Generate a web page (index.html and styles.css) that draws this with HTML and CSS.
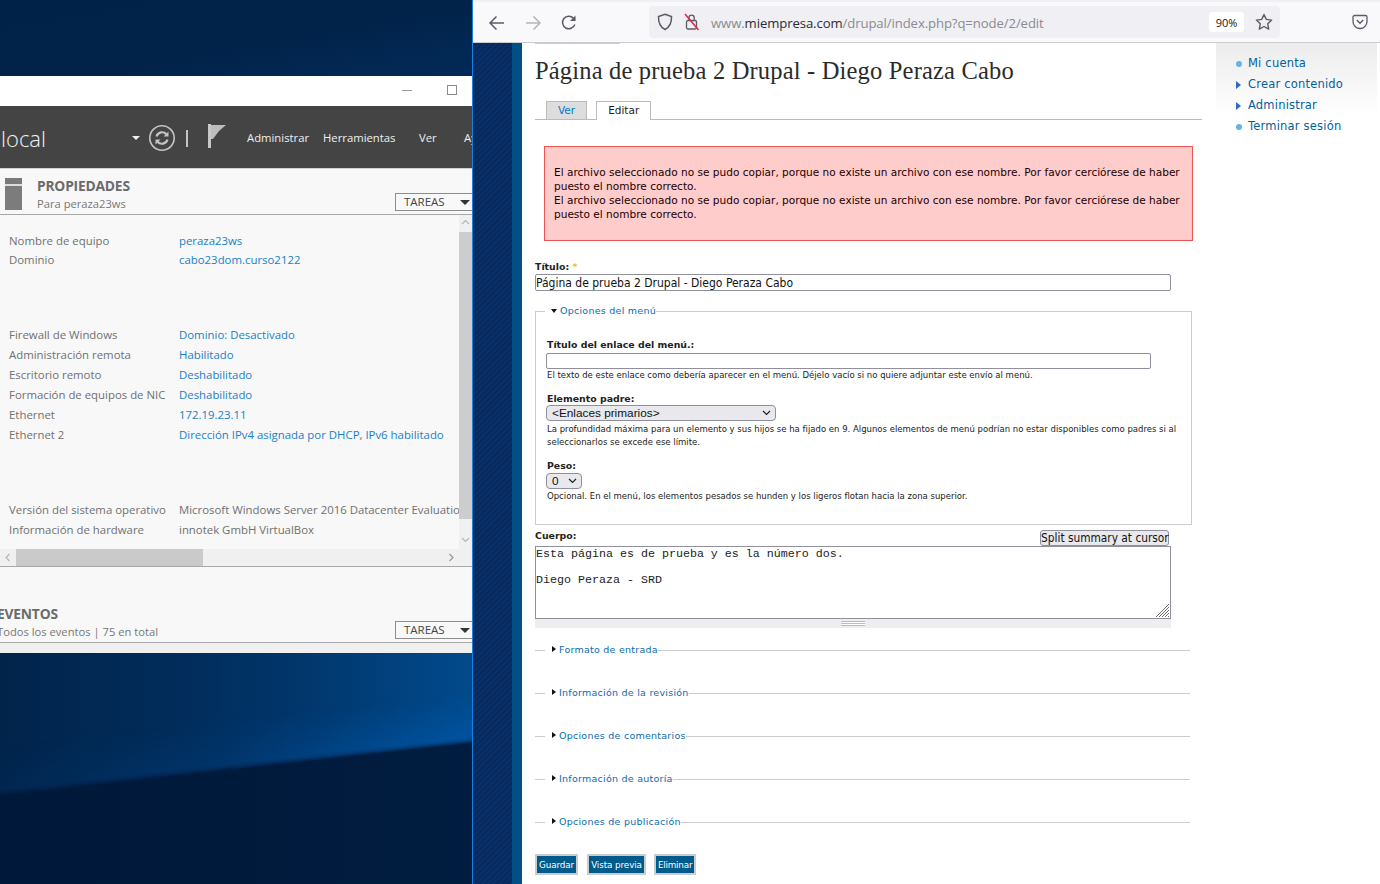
FILE: index.html
```html
<!DOCTYPE html>
<html lang="es">
<head>
<meta charset="utf-8">
<title>Página de prueba 2 Drupal</title>
<link rel="stylesheet" href="styles.css">
</head>
<body>
<div class="desktop">
  <div class="beam-top"></div>
  <div class="beam-bottom"></div>
  <div class="window">
    <div class="titlebar">
      <span class="win-min"></span>
      <span class="win-max"></span>
    </div>
    <div class="srv-head">
      <span class="srv-title">local</span>
      <span class="srv-caret"></span>
      <svg class="srv-refresh" width="28" height="28" viewBox="0 0 28 28"><circle cx="14" cy="14" r="12.2" fill="none" stroke="#c4c4c4" stroke-width="1.6"/><path d="M8.5 12.5a5.8 5.8 0 0 1 10-2.2M19.5 15.5a5.8 5.8 0 0 1-10 2.2" fill="none" stroke="#c4c4c4" stroke-width="2.2"/><path d="M20.5 7.5v5h-5zM7.5 20.5v-5h5z" fill="#c4c4c4"/></svg>
      <span class="srv-sep"></span>
      <svg class="srv-flag" width="18" height="24" viewBox="0 0 18 24"><path d="M0 0h3v24H0z" fill="#c8c8c8"/><path d="M3 1h15l-7 6-6 8H3z" fill="#bdbdbd"/></svg>
      <nav class="srv-nav">
        <span class="nav-a">Administrar</span>
        <span class="nav-b">Herramientas</span>
        <span class="nav-c">Ver</span>
        <span class="nav-d">Ayuda</span>
      </nav>
    </div>
    <div class="sec-head">
      <div class="srv-icon"></div>
      <div class="sec-text">
        <strong>PROPIEDADES</strong>
        <span>Para peraza23ws</span>
      </div>
      <div class="tasks">TAREAS<i></i></div>
    </div>
    <div class="props">
      <div class="props-body">
        <div class="props-main">
          <div class="group g1">
            <div class="row"><span>Nombre de equipo</span><a>peraza23ws</a></div>
            <div class="row"><span>Dominio</span><a>cabo23dom.curso2122</a></div>
          </div>
          <div class="group g2">
            <div class="row"><span>Firewall de Windows</span><a>Dominio: Desactivado</a></div>
            <div class="row"><span>Administración remota</span><a>Habilitado</a></div>
            <div class="row"><span>Escritorio remoto</span><a>Deshabilitado</a></div>
            <div class="row"><span>Formación de equipos de NIC</span><a>Deshabilitado</a></div>
            <div class="row"><span>Ethernet</span><a>172.19.23.11</a></div>
            <div class="row"><span>Ethernet 2</span><a>Dirección IPv4 asignada por DHCP, IPv6 habilitado</a></div>
          </div>
          <div class="group g3">
            <div class="row"><span>Versión del sistema operativo</span><em>Microsoft Windows Server 2016 Datacenter Evaluation</em></div>
            <div class="row"><span>Información de hardware</span><em>innotek GmbH VirtualBox</em></div>
          </div>
        </div>
        <div class="vbar">
          <svg class="chev" width="13" height="14" viewBox="0 0 13 14"><path d="M3 9l3.5-3.5L10 9" fill="none" stroke="#b5b5b5" stroke-width="1.2"/></svg>
          <div class="vthumb"></div>
          <svg class="chev" width="13" height="14" viewBox="0 0 13 14"><path d="M3 5l3.5 3.5L10 5" fill="none" stroke="#b5b5b5" stroke-width="1.2"/></svg>
        </div>
      </div>
      <div class="hbar">
        <svg width="16" height="17" viewBox="0 0 16 17"><path d="M9.5 5L6 8.5l3.5 3.5" fill="none" stroke="#b5b5b5" stroke-width="1.2"/></svg>
        <div class="hthumb"></div>
        <svg class="hright" width="16" height="17" viewBox="0 0 16 17"><path d="M6.5 5L10 8.5 6.5 12" fill="none" stroke="#999" stroke-width="1.2"/></svg>
      </div>
    </div>
    <div class="sec-head events">
      <div class="sec-text">
        <strong>EVENTOS</strong>
        <span>Todos los eventos | 75 en total</span>
      </div>
      <div class="tasks">TAREAS<i></i></div>
    </div>
    <div class="win-foot"></div>
  </div>
</div>

<div class="browser">
  <div class="tabstrip"></div>
  <div class="toolbar">
    <svg class="tb-icon tb-back" width="18" height="16" viewBox="0 0 18 16"><path d="M16 8H2M8.500 1.500L2 8l6.500 6.500" fill="none" stroke="#5b5b66" stroke-width="1.500"/></svg>
    <svg class="tb-icon tb-fwd" width="18" height="16" viewBox="0 0 18 16"><path d="M2 8h14M9.500 1.500L16 8l-6.500 6.500" fill="none" stroke="#b4b4ba" stroke-width="1.500"/></svg>
    <svg class="tb-icon tb-reload" width="18" height="18" viewBox="0 0 18 18"><path d="M14.800 10.500A6.300 6.300 0 1 1 13.500 4.200L15 6" fill="none" stroke="#5b5b66" stroke-width="1.500"/><path d="M15.500 1.500v5.500H10z" fill="#5b5b66"/></svg>
    <div class="urlbar">
      <svg class="ub-shield" width="16" height="18" viewBox="0 0 16 18"><path d="M8 1.200l6.500 2.300c.2 5.800-1.700 10.500-6.500 13-4.800-2.500-6.700-7.200-6.500-13z" fill="none" stroke="#5b5b66" stroke-width="1.500"/></svg>
      <svg class="ub-lock" width="16" height="18" viewBox="0 0 16 18"><rect x="2.500" y="7.500" width="10" height="8.500" rx="1.500" fill="none" stroke="#5b5b66" stroke-width="1.300"/><path d="M5 7.500V4.800a2.600 2.600 0 0 1 5.200 0v2.700" fill="none" stroke="#5b5b66" stroke-width="1.300"/><path d="M1 1l13.500 16" stroke="#e22850" stroke-width="1.600"/></svg>
      <div class="ub-url">www.<b>miempresa.com</b>/drupal/index.php?q=node/2/edit</div>
      <div class="ub-zoom">90%</div>
      <svg class="ub-star" width="18" height="18" viewBox="0 0 18 18"><path d="M9 1.500l2.300 4.900 5.300.7-3.900 3.700 1 5.300L9 13.500l-4.700 2.600 1-5.300L1.400 7.100l5.300-.7z" fill="none" stroke="#5b5b66" stroke-width="1.400" stroke-linejoin="round"/></svg>
    </div>
    <svg class="tb-pocket" width="16" height="16" viewBox="0 0 16 16"><path d="M2.500 1.500h11a1.500 1.500 0 0 1 1.500 1.500v4.500a7 7 0 0 1-14 0V3a1.500 1.500 0 0 1 1.500-1.500z" fill="none" stroke="#5b5b66" stroke-width="1.300"/><path d="M4.800 6l3.200 3.200L11.200 6" fill="none" stroke="#5b5b66" stroke-width="1.400"/></svg>
  </div>
  <div class="page">
    <div class="side-blue"></div>
    <main class="content">
      <div class="stub"></div>
      <h1>Página de prueba 2 Drupal - Diego Peraza Cabo</h1>
      <ul class="tabs">
        <li class="tab">Ver</li>
        <li class="tab active">Editar</li>
      </ul>
      <div class="error">
        El archivo seleccionado no se pudo copiar, porque no existe un archivo con ese nombre. Por favor cerciórese de haber puesto el nombre correcto.<br>
        El archivo seleccionado no se pudo copiar, porque no existe un archivo con ese nombre. Por favor cerciórese de haber puesto el nombre correcto.
      </div>
      <form>
        <label class="lbl title-lbl">Título: <span class="req">*</span></label>
        <input class="in title-in" type="text" value="Página de prueba 2 Drupal - Diego Peraza Cabo">
        <fieldset class="menu-fs">
          <legend><i class="arr-down"></i>Opciones del menú</legend>
          <label class="lbl">Título del enlace del menú.:</label>
          <input class="in link-in" type="text">
          <p class="desc">El texto de este enlace como debería aparecer en el menú. Déjelo vacío si no quiere adjuntar este envío al menú.</p>
          <label class="lbl parent-lbl">Elemento padre:</label>
          <select class="sel parent-sel"><option>&lt;Enlaces primarios&gt;</option></select>
          <p class="desc">La profundidad máxima para un elemento y sus hijos se ha fijado en 9. Algunos elementos de menú podrían no estar disponibles como padres si al seleccionarlos se excede ese límite.</p>
          <label class="lbl weight-lbl">Peso:</label>
          <select class="sel weight-sel"><option>0</option></select>
          <p class="desc">Opcional. En el menú, los elementos pesados se hunden y los ligeros flotan hacia la zona superior.</p>
        </fieldset>
        <div class="body-head">
          <label class="lbl">Cuerpo:</label>
          <button class="split" type="button">Split summary at cursor</button>
        </div>
        <div class="ta-wrap">
          <textarea class="body-ta">Esta página es de prueba y es la número dos.

Diego Peraza - SRD</textarea>
          <svg class="ta-grip" width="15" height="15" viewBox="0 0 15 15"><path d="M1 14L14 1M4 14L14 4M7 14L14 7M10 14l4-4M13 14l1-1" stroke="#6a6a6a" stroke-width="1" fill="none"/></svg>
        </div>
        <div class="grippie"><span></span></div>
        <fieldset class="col-fs first"><legend><i class="arr-right"></i>Formato de entrada</legend></fieldset>
        <fieldset class="col-fs"><legend><i class="arr-right"></i>Información de la revisión</legend></fieldset>
        <fieldset class="col-fs"><legend><i class="arr-right"></i>Opciones de comentarios</legend></fieldset>
        <fieldset class="col-fs"><legend><i class="arr-right"></i>Información de autoría</legend></fieldset>
        <fieldset class="col-fs"><legend><i class="arr-right"></i>Opciones de publicación</legend></fieldset>
        <div class="actions">
          <button type="button" class="act">Guardar</button>
          <button type="button" class="act">Vista previa</button>
          <button type="button" class="act">Eliminar</button>
        </div>
      </form>
    </main>
    <aside class="right">
      <ul>
        <li class="leaf">Mi cuenta</li>
        <li class="coll">Crear contenido</li>
        <li class="coll">Administrar</li>
        <li class="leaf">Terminar sesión</li>
      </ul>
    </aside>
  </div>
</div>
</body>
</html>
```
FILE: styles.css
```css
* { box-sizing: border-box; }
html, body { margin: 0; padding: 0; width: 1380px; height: 884px; overflow: hidden; }
body { display: flex; font-family: "DejaVu Sans", sans-serif; background: #fff; }

/* Desktop */
.desktop {
  position: relative; width: 472px; height: 884px; overflow: hidden; flex: none;
  background: #012248;
}
.beam-top {
  position: absolute; left: 0; top: 0; width: 472px; height: 76px;
  background: linear-gradient(170deg, #012248 0%, #01234a 55%, #022a58 100%);
}
.beam-bottom {
  position: absolute; left: 0; top: 653px; width: 472px; height: 231px;
  background:
    linear-gradient(173.6deg, transparent 48%, rgba(0, 24, 56, .9) 50.500%),
    linear-gradient(90deg, #01244b 0%, #012d5c 40%, #01376d 65%, #014a8c 100%);
}
.beam-bottom::before {
  content: ""; position: absolute; inset: 0;
  background: linear-gradient(173.6deg, transparent 32%, rgba(0, 92, 180, .5) 49%, transparent 50.500%);
  -webkit-mask-image: linear-gradient(90deg, rgba(0, 0, 0, .1), rgba(0, 0, 0, .3) 50%, #000);
  mask-image: linear-gradient(90deg, rgba(0, 0, 0, .1), rgba(0, 0, 0, .3) 50%, #000);
}
.window {
  position: absolute; left: 0; top: 76px; width: 472px; height: 577px;
  display: flex; flex-direction: column; background: #f8f8f8; overflow: hidden;
  font-family: "Open Sans", sans-serif; color: #6e6e6e;
}
.titlebar { height: 30px; background: #fff; position: relative; flex: none; }
.win-min { position: absolute; left: 402px; top: 14px; width: 10px; height: 1px; background: #9a9a9a; }
.win-max { position: absolute; left: 447px; top: 9px; width: 10px; height: 10px; border: 1px solid #8a8a8a; }
.srv-head {
  height: 63px; background: #444; position: relative; flex: none;
  border-bottom: 1px solid #d0d0d0; color: #fff;
}
.srv-title { position: absolute; left: 1px; top: 14px; font: 300 22px/36px "Open Sans", sans-serif; color: #f2f2f2; }
.srv-caret { position: absolute; left: 132px; top: 30px; border: 4px solid transparent; border-top-color: #eee; border-bottom: 0; }
.srv-refresh { position: absolute; left: 148px; top: 18px; }
.srv-sep { position: absolute; left: 186px; top: 24px; width: 2px; height: 17px; background: #c4c4c4; }
.srv-flag { position: absolute; left: 208px; top: 18px; }
.srv-nav span { position: absolute; top: 24px; font-size: 11.300px; line-height: 16px; color: #f0f0f0; white-space: nowrap; }
.nav-a { left: 247px; } .nav-b { left: 323px; } .nav-c { left: 419px; } .nav-d { left: 464px; }

.sec-head {
  height: 46px; display: flex; align-items: flex-start; flex: none; position: relative;
  border-bottom: 1px solid #a8a8a8; background: #f8f8f8;
}
.srv-icon {
  width: 17px; height: 32px; margin: 9px 0 0 5px;
  background: linear-gradient(#7a7a7a 0 6px, #ddd 6px 8px, #7c7c7c 8px);
}
.sec-text { display: flex; flex-direction: column; margin: 7px 0 0 15px; }
.sec-text strong { font-size: 13.800px; line-height: 20px; font-weight: 700; color: #6b6b6b; letter-spacing: -.2px; }
.sec-text span { font-size: 11.200px; line-height: 16px; color: #777; }
.tasks {
  position: absolute; left: 395px; top: 24px; width: 77px; height: 18px; border: 1px solid #8d8d8d; border-right: 0;
  font-size: 11.500px; line-height: 16px; color: #444; padding-left: 8px;
}
.tasks i { position: absolute; left: 64px; top: 6px; border: 5px solid transparent; border-top: 5px solid #333; border-bottom: 0; }

.props { flex: none; height: 352px; display: flex; flex-direction: column; border-bottom: 1px solid #a8a8a8; }
.props-body { flex: 1; display: flex; min-height: 0; }
.props-main { flex: 1; min-width: 0; overflow: hidden; padding: 16px 0 0 9px; }
.group { display: flex; flex-direction: column; }
.g2 { margin-top: 56px; }
.g3 { margin-top: 55px; }
.row { display: flex; white-space: nowrap; font-size: 11.400px; line-height: 19px; height: 19px; }
.g2 .row, .g3 .row { height: 20px; line-height: 20px; }
.row span { width: 170px; flex: none; color: #707070; }
.row a { color: #1a7fc8; }
.row em { font-style: normal; color: #707070; }
.vbar { width: 13px; flex: none; background: #f0f0f0; display: flex; flex-direction: column; }
.chev { flex: none; }
.vthumb { height: 287px; margin-top: 3px; background: #cdcdcd; flex: none; }
.vbar .chev:last-child { margin: auto 0 2px; }
.hbar { height: 17px; flex: none; background: #f0f0f0; display: flex; }
.hthumb { width: 187px; background: #cacaca; flex: none; }
.hright { margin-left: 240px; }
.events { height: 76px; }
.events .sec-text { margin: 37px 0 0 -3px; }
.events .tasks { top: 54px; }
.win-foot { flex: 1; background: #f0f0f0; }

/* Browser */
.browser { width: 908px; height: 884px; flex: none; display: flex; flex-direction: column; border-left: 1px solid #1b7fdc; }
.tabstrip { height: 2px; background: #f0f0f4; flex: none; }
.toolbar {
  height: 41px; background: #f9f9fb; border-bottom: 1px solid #ccc; flex: none;
  position: relative; display: flex; align-items: center;
}
.tb-icon { margin-top: 2px; }
.tb-back { margin-left: 15px; }
.tb-fwd { margin-left: 18px; }
.tb-reload { margin-left: 18px; }
.urlbar {
  width: 631px; height: 32px; background: #f0f0f4; border-radius: 4px; margin-left: 71px;
  display: flex; align-items: center; position: relative;
}
.ub-shield { margin-left: 8px; }
.ub-lock { margin-left: 11px; }
.ub-url { margin: 2px 0 0 11px; font: 13.150px/20px "Open Sans", sans-serif; color: #8a8a92; white-space: nowrap; letter-spacing: -.1px; }
.ub-url b { font-weight: 400; color: #2b2b33; }
.ub-zoom {
  position: absolute; left: 560px; top: 6px; width: 35px; height: 20px; background: #fff; border-radius: 3px;
  font: 11px/21px "Open Sans", sans-serif; color: #15141a; text-align: center;
}
.ub-star { position: absolute; left: 606px; top: 7px; }
.tb-pocket { position: absolute; right: 12px; top: 12px; }

.page { flex: 1; display: flex; min-height: 0; background: #fff; }
.side-blue {
  width: 49px; flex: none;
  background: linear-gradient(90deg, transparent 39px, #004f85 39px),
    repeating-linear-gradient(135deg, #0a2f68 0 2px, #062a5e 2px 4px);
}
.content { width: 694px; flex: none; padding: 0 14px 0 13px; font-size: 10.550px; color: #222; }
.stub { width: 85px; height: 1px; background: #ccc; }
h1 { margin: 12px 0 0; font: 400 24.500px/30px "Liberation Serif", serif; letter-spacing: .18px; color: #2b2b2b; white-space: nowrap; }
.tabs { list-style: none; margin: 15px 0 0; padding: 0 0 0 11px; display: flex; gap: 9px; border-bottom: 1px solid #bbb; height: 19px; }
.tab { height: 18px; padding: 0 11px; background: #ddd; border: 1px solid #bbb; border-bottom: 0; color: #027ac6; font-size: 10.500px; line-height: 17px; }
.tab.active { height: 19px; background: #fff; color: #222; padding: 0 11px; }
.error {
  margin: 26px 0 0 9px; width: 649px; height: 95px; padding: 18px 9px; background: #fcc; border: 1px solid #ed5555;
  line-height: 14px; color: #200;
}
.lbl { display: block; font-weight: 700; font-size: 9.400px; line-height: 14px; color: #222; }
.req { color: #f5b342; }
.title-lbl { margin-top: 19px; }
.in { display: block; height: 17px; border: 1px solid #8f8f9d; border-radius: 2px; background: #fff; padding: 0; font: 12px/15px "DejaVu Sans Condensed", "DejaVu Sans", sans-serif; color: #111; }
.title-in { width: 636px; margin-top: 0; }
.menu-fs { margin: 13px 0 0; padding: 20px 10px 0; width: 657px; height: 221px; border: 1px solid #ccc; }
.menu-fs .lbl, .menu-fs .desc { margin-left: 1px; }
.menu-fs legend, .col-fs legend { font-size: 9.500px; line-height: 14px; color: #0a6cae; letter-spacing: .25px; white-space: nowrap; }
.menu-fs legend { padding: 0 0 0 6px; margin-left: -1px; }
.col-fs legend { padding: 0 0 0 7px; margin-left: 10px; }
.arr-down, .arr-right { display: inline-block; vertical-align: 1px; width: 0; height: 0; }
.arr-down { border: 3.500px solid transparent; border-top: 4px solid #111; border-bottom: 0; margin-right: 3px; }
.arr-right { border: 3.500px solid transparent; border-left: 4px solid #111; border-right: 0; margin-right: 3px; }
.link-in { width: 605px; height: 16px; margin-top: 1px; }
.desc { margin: 0; font-size: 8.520px; line-height: 13px; color: #222; }
.parent-sel + .desc { margin-top: 2px; }
.weight-sel + .desc { margin-top: 1px; }
.menu-fs .parent-lbl { margin-top: 10px; }
.sel {
  display: block; appearance: none; -webkit-appearance: none;
  border: 1px solid #8f8f9d; border-radius: 4px; padding: 0 5px; background-color: #e9e9ed;
  background-image: url("data:image/svg+xml,%3Csvg xmlns='http://www.w3.org/2000/svg' width='9' height='6'%3E%3Cpath d='M1 1l3.500 3.500L8 1' fill='none' stroke='%23222' stroke-width='1.200'/%3E%3C/svg%3E");
  background-repeat: no-repeat; background-position: right 4px center;
  font: 11.800px/14px "Liberation Sans", sans-serif; color: #111;
}
.parent-sel { width: 230px; height: 16px; margin-top: -1px; }
.menu-fs .weight-lbl { margin-top: 10px; }
.weight-sel { width: 36px; height: 16px; }
.body-head { display: flex; justify-content: space-between; align-items: flex-end; width: 634px; height: 17px; margin-top: 4px; }
.body-head .lbl { align-self: flex-start; margin-top: 0; }
.split { height: 16px; width: 129px; padding: 0; border: 1px solid #8f8f9d; border-radius: 3px; background: #e9e9ed; font: 11.800px/14px "DejaVu Sans Condensed", "DejaVu Sans", sans-serif; color: #111; white-space: nowrap; }
.ta-wrap { position: relative; width: 636px; height: 73px; }
.body-ta { display: block; width: 636px; height: 73px; margin: 0; padding: 1px 0 0; border: 1px solid #8f8f9d; font: 11.670px/13px "Liberation Mono", monospace; color: #222; background: #fff; border-radius: 0; resize: none; }
.ta-grip { position: absolute; right: 1px; bottom: 1px; }
.grippie { width: 636px; height: 9px; background: #eee; border: 1px solid #eee; display: flex; justify-content: center; align-items: center; }
.grippie span { width: 24px; height: 5px; border-top: 1px solid #bbb; border-bottom: 1px solid #bbb; background: linear-gradient(#fff 1px, #bbb 1px 2px, #fff 2px); }
.col-fs { margin: 29px 0 0; padding: 0; width: 655px; height: 14px; border: 0; border-top: 1px solid #ccc; }
.col-fs.first { margin-top: 15px; }
.actions { margin-top: 25px; display: flex; gap: 9px; }
.act { height: 21px; padding: 1px 2px 0; border: 2px solid #ccc; background: #005a8c; color: #fff; font: 8.800px/15px "DejaVu Sans", sans-serif; letter-spacing: -.1px; }
.act:last-child { margin-left: -1px; letter-spacing: -.2px; }

.right { width: 164px; flex: none; }
.right ul {
  list-style: none; margin: 0; padding: 10px 0 0 32px; width: 161px; height: 72px;
  background: linear-gradient(#ececec, #fff);
  font-size: 11.500px; line-height: 21px; color: #025f9e; letter-spacing: .2px;
}
.right li { position: relative; white-space: nowrap; }
.right li::before { content: ""; position: absolute; left: -12px; }
.leaf::before { top: 8px; width: 6px; height: 6px; border-radius: 50%; background: #62b4ea; }
.coll::before { top: 7px; border: 4px solid transparent; border-left: 5px solid #2a6cc4; border-right: 0; }
```
